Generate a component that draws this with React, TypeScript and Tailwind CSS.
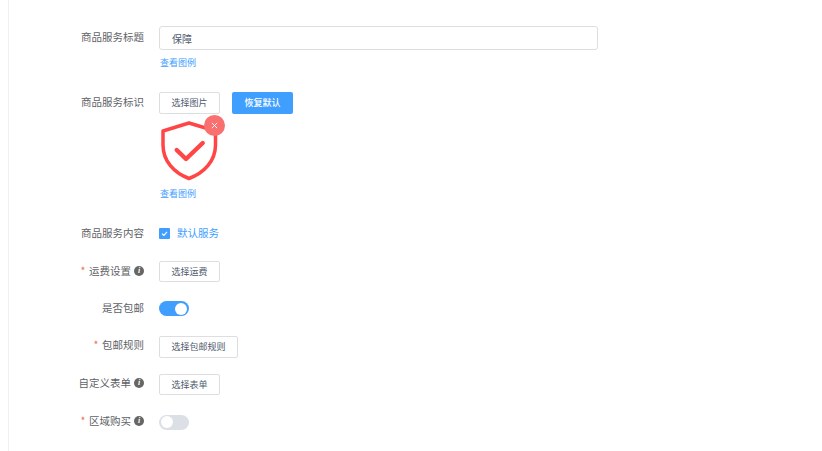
import React from "react";

const font = { fontFamily: '"Noto Sans CJK SC", "Liberation Sans", sans-serif' };

function Info() {
  return (
    <span className="ml-[3px] inline-flex h-[10px] w-[10px] items-center justify-center rounded-full bg-[#666666] text-[8px] font-bold italic leading-none text-white" style={{ fontFamily: '"Liberation Serif", serif' }}>
      i
    </span>
  );
}

function Row({ label, star, info, children, className = "", labelClass = "pb-[2px]" }: { label: string; star?: boolean; info?: boolean; children: React.ReactNode; className?: string; labelClass?: string }) {
  return (
    <div className={"flex items-center " + className}>
      <div className={"flex w-[135px] shrink-0 items-center justify-end text-[10.5px] leading-[14px] text-[#606266] " + labelClass}>
        {star && <span className="mr-[3.5px] text-[#f0705a]">*</span>}
        <span>{label}</span>
        {info && <Info />}
      </div>
      <div className="ml-[15px] flex items-center">{children}</div>
    </div>
  );
}

function Btn({ children, w, h = "h-[21px]" }: { children: React.ReactNode; w: string; h?: string }) {
  return (
    <button className={"flex items-center justify-center rounded-[2px] border border-[#dcdee2] bg-white text-[9px] text-[#515a6e] " + h + " " + w}>
      {children}
    </button>
  );
}

function Hint({ className = "" }: { className?: string }) {
  return <div className={"ml-[151px] text-[9px] leading-[12px] text-[#409eff] " + className}>查看图例</div>;
}

function Toggle({ on }: { on: boolean }) {
  return (
    <div className={"flex h-[15px] w-[30px] items-center rounded-full px-[2px] " + (on ? "justify-end bg-[#409eff]" : "justify-start bg-[#dcdfe6]")}>
      <div className="h-[12px] w-[12px] rounded-full bg-white" />
    </div>
  );
}

export default function App() {
  return (
    <div className="h-[451px] w-[822px] overflow-hidden bg-white" style={font}>
      <div className="ml-[8px] h-full border-l border-[#eef0f4] pt-[26px]">
        <div className="flex items-start">
          <div className="flex h-[24px] w-[135px] shrink-0 items-center justify-end pb-[2px] text-[10.5px] text-[#606266]">商品服务标题</div>
          <div className="ml-[15px] flex h-[24px] w-[439px] items-center rounded-[3px] border border-[#dcdee2] pl-[12px] text-[10px] text-[#515a6e]">保障</div>
        </div>
        <Hint className="mt-[7px]" />

        <Row label="商品服务标识" className="mt-[23px]">
          <div className="flex gap-[12px]">
            <Btn w="w-[61px]" h="h-[22px]">选择图片</Btn>
            <button className="flex h-[22px] w-[61px] items-center justify-center rounded-[2px] bg-[#409eff] text-[9px] font-medium text-white">恢复默认</button>
          </div>
        </Row>
        <div className="relative ml-[151px] mt-[7px] h-[60px] w-[58px]">
          <svg viewBox="0 0 58 60" className="h-[60px] w-[58px]" fill="none">
            <path d="M3 10 L29 2 L55.5 10 V24 C55.5 40 44 52 29 57.5 C14 52 3 40 3 24 Z" stroke="#ff4545" strokeWidth="3.5" strokeLinejoin="round" />
            <path d="M16.7 29 L26 38 L42.7 22" stroke="#ff4545" strokeWidth="4.4" strokeLinecap="round" strokeLinejoin="round" />
          </svg>
          <div className="absolute left-[44px] top-[-6px] flex h-[21px] w-[21px] items-center justify-center rounded-full bg-[#f87070]">
            <svg viewBox="0 0 8 8" className="h-[7px] w-[7px]" stroke="#ffffff" strokeWidth="1">
              <path d="M1 1 L7 7 M7 1 L1 7" />
            </svg>
          </div>
        </div>
        <Hint className="mt-[7px]" />

        <Row label="商品服务内容" className="mt-[26px]" labelClass="">
          <div className="flex h-[11px] w-[11px] items-center justify-center rounded-[1px] bg-[#409eff]">
            <svg viewBox="0 0 11 11" className="h-[11px] w-[11px]" fill="none" stroke="#ffffff" strokeWidth="1.2">
              <path d="M3 5.6 L4.9 7.4 L8 3.8" />
            </svg>
          </div>
          <span className="ml-[7px] text-[10.5px] leading-[14px] text-[#409eff]">默认服务</span>
        </Row>
        <Row label="运费设置" star info className="mt-[21px]">
          <Btn w="w-[61px]">选择运费</Btn>
        </Row>
        <Row label="是否包邮" className="mt-[19px]" labelClass="pb-[1px]">
          <Toggle on />
        </Row>
        <Row label="包邮规则" star className="mt-[20px]" labelClass="pb-[4px]">
          <Btn w="w-[79px]" h="h-[22px]">选择包邮规则</Btn>
        </Row>
        <Row label="自定义表单" info className="mt-[16px]" labelClass="pb-[3px]">
          <Btn w="w-[61px]">选择表单</Btn>
        </Row>
        <Row label="区域购买" star info className="mt-[19px]">
          <Toggle on={false} />
        </Row>
      </div>
    </div>
  );
}
